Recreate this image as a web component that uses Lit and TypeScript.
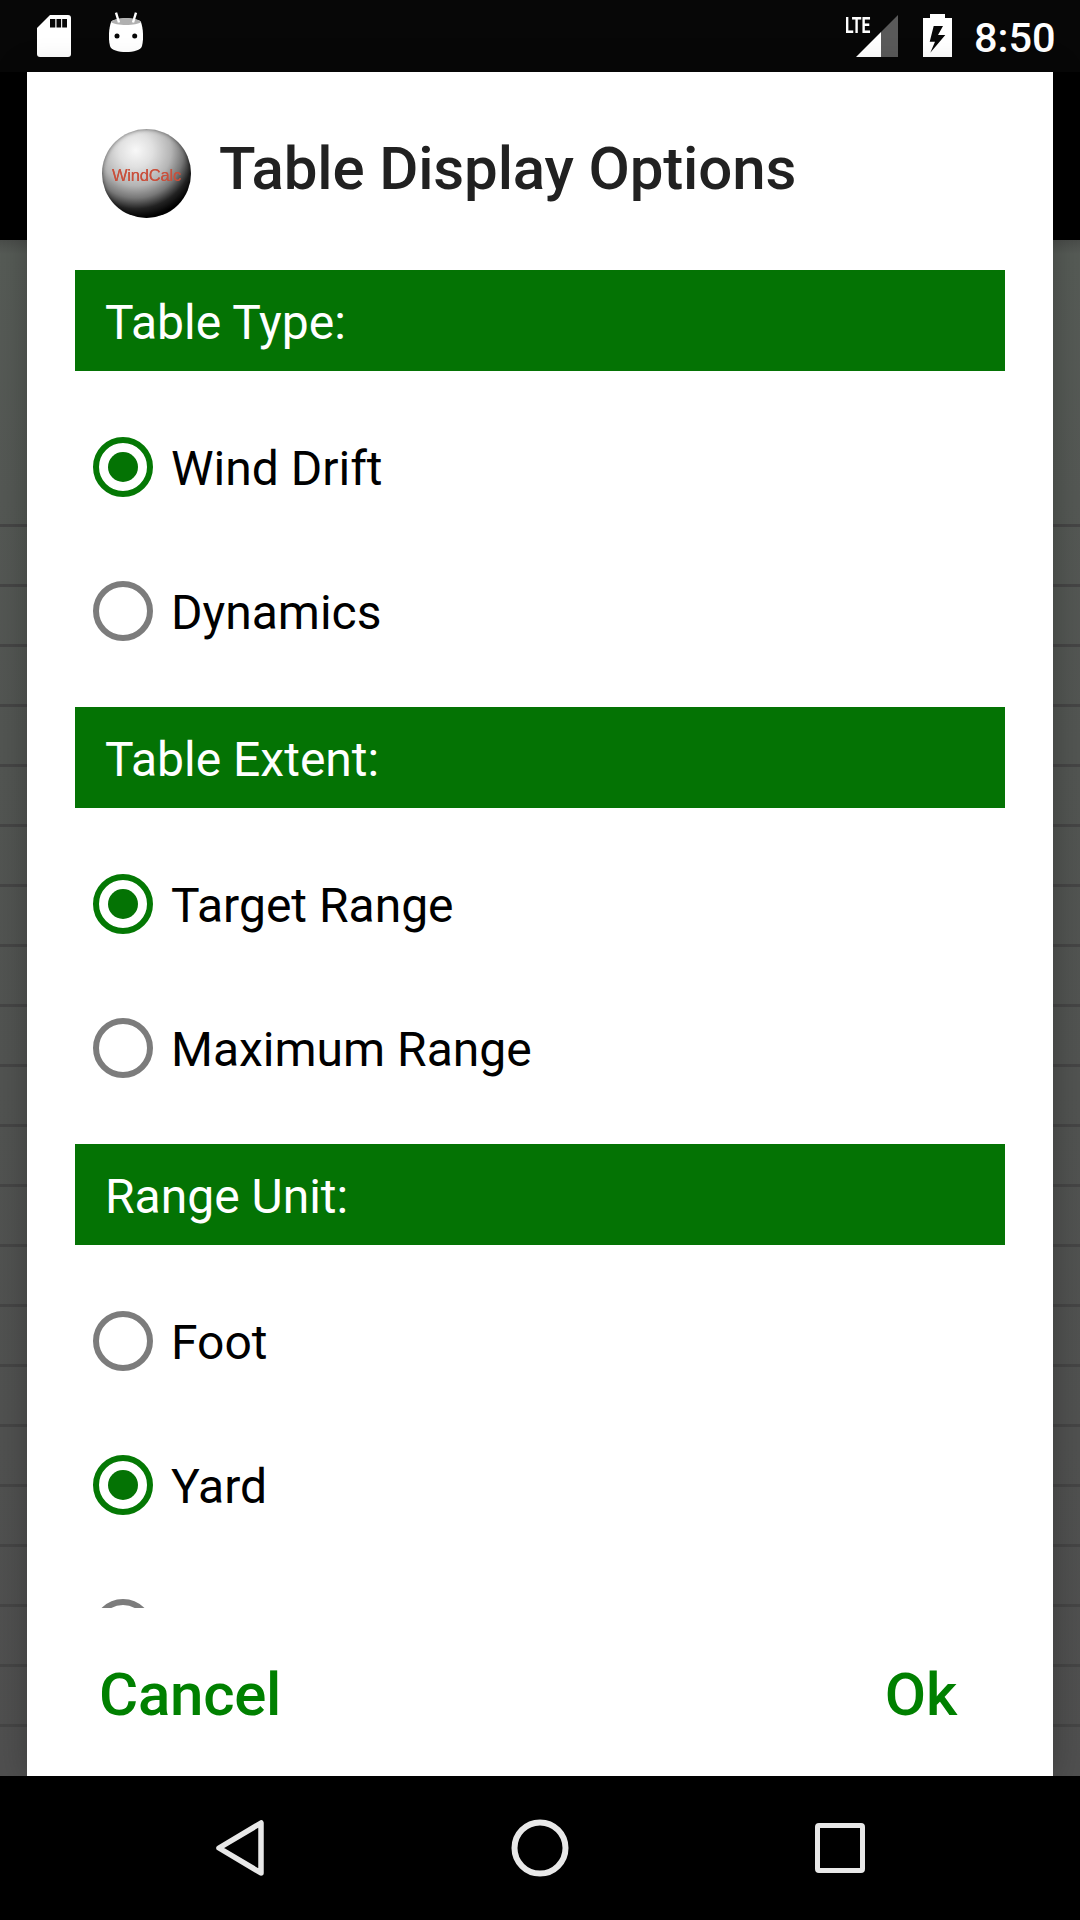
import { LitElement, html, css } from "lit";
import { customElement } from "lit/decorators.js";

const sections: { title: string; options: [string, boolean][] }[] = [
  { title: "Table Type:", options: [["Wind Drift", true], ["Dynamics", false]] },
  { title: "Table Extent:", options: [["Target Range", true], ["Maximum Range", false]] },
  { title: "Range Unit:", options: [["Foot", false], ["Yard", true], ["", false]] },
];

@customElement("app-root")
export class AppRoot extends LitElement {
  static styles = css`
    :host { display: block; width: 1080px; height: 1920px; position: relative; overflow: hidden; font-family: Roboto, sans-serif; background: #000; }
    .page { display: flex; flex-direction: column; height: 1920px; }
    .status { height: 72px; background: #070707; display: flex; align-items: center; flex: none; }
    .sd { width: 34px; height: 42px; margin-left: 37px; display: block; }
    .droid { width: 34px; height: 42px; margin-left: 38px; margin-bottom: 6px; display: block; }
    .spacer { flex: 1; }
    .net { position: relative; width: 53px; height: 42px; margin-right: 25px; }
    .net svg { position: absolute; left: 11px; top: 0; width: 42px; height: 42px; }
    .lte { position: absolute; left: 0; top: -2px; font: 700 22.5px/24px Roboto, sans-serif; color: #fff; transform: scaleX(.7); transform-origin: left top; }
    .batt { width: 29px; height: 43px; margin-right: 22px; margin-bottom: 1px; display: block; }
    .clock { color: #fff; font: 500 41.5px/48px Roboto, sans-serif; margin-top: 4px; margin-right: 25px; width: 81px; white-space: nowrap; }
    .head { height: 168px; background: #000; flex: none; }
    .back { flex: 1; background: linear-gradient(180deg, #4a4d4a 0, #565b56 14px, #525552 500px, #4f4f4f 1536px); display: flex; flex-direction: column; padding-top: 284px; gap: 57px; overflow: hidden; }
    .back i { display: block; height: 3px; background: #454545; flex: none; }
    .nav { height: 144px; background: #000; flex: none; display: flex; align-items: center; }
    .nav svg { display: block; }
    .nb { width: 60px; height: 64px; margin-left: 210px; }
    .nh { width: 60px; height: 60px; margin-left: 240px; }
    .nr { width: 58px; height: 58px; margin-left: 241px; }
    .dialog { position: absolute; left: 27px; top: 72px; width: 1026px; height: 1704px; background: #fff; display: flex; flex-direction: column; box-shadow: 0 0 30px rgba(0,0,0,.25); }
    .title { height: 198px; flex: none; display: flex; align-items: flex-start; }
    .logo { width: 89px; height: 89px; margin: 57px 0 0 75px; border-radius: 50%; flex: none; display: flex; align-items: center; justify-content: center;
      background: radial-gradient(circle 68px at 38% 24%, #f8f8f8 0, #e0e0e0 25%, #b4b4b4 52%, #777 70%, #222 86%, #000 100%);
      box-shadow: inset 0 0 4px rgba(0,0,0,.55); filter: blur(.7px); }
    .logo span { font: 400 16.5px/20px "Liberation Sans", sans-serif; color: #c9503c; letter-spacing: -.2px; margin-top: 2px; text-shadow: 0 0 .6px #c9503c; }
    h1 { margin: 0 0 0 28px; padding-top: 62px; font: 500 60px/70px Roboto, sans-serif; letter-spacing: -.15px; color: #212121; white-space: nowrap; }
    .scroll { flex: 1; overflow: hidden; padding: 0 48px; min-height: 0; }
    .bar { height: 101px; background: #047304; color: #fff; font: 400 48px/105px Roboto, sans-serif; padding-left: 30px; margin-bottom: 24px; }
    .group { margin-bottom: 24px; }
    .row { height: 144px; display: flex; align-items: center; padding-left: 18px; font: 400 48px/60px Roboto, sans-serif; color: #000; }
    .label { margin-top: 3px; }
    .radio { width: 60px; height: 60px; border: 6px solid #7c7c7c; box-sizing: border-box; border-radius: 50%; margin-right: 18px; flex: none; display: flex; align-items: center; justify-content: center; }
    .radio.on { border-color: #047804; }
    .radio.on::after { content: ""; width: 30px; height: 30px; background: #047304; border-radius: 50%; }
    .foot { height: 168px; flex: none; display: flex; justify-content: space-between; padding: 0 96px 0 72px; align-items: flex-start; }
    .foot span { font: 500 60px/70px Roboto, sans-serif; letter-spacing: -.25px; color: #008000; padding-top: 52px; }
  `;

  render() {
    return html`
      <div class="page">
        <div class="status">
          <svg class="sd" viewBox="0 0 34 42"><path fill="#fff" d="M13 0H31a3 3 0 0 1 3 3V39a3 3 0 0 1-3 3H3a3 3 0 0 1-3-3V13Z"/><path fill="#070707" d="M13 4h5.300v8.500H13zM19.500 4h4.600v8.500h-4.600zM25.200 4H30v8.500h-4.800z"/></svg>
          <svg class="droid" viewBox="0 0 34 42"><path fill="#fff" d="M2 10C6 5 28 5 32 10 34 16 35 26 33 34 31 42 3 42 1 34-1 26 0 16 2 10Z"/><path fill="#b0b0b0" d="M2 10C6 5 28 5 32 10 28 14 6 14 2 10Z"/><path stroke="#fff" stroke-width="2.400" fill="none" d="M7 .7l3 9.800M27 .7l-3 9.800"/><circle cx="8" cy="24" r="2.500" fill="#070707"/><circle cx="25.700" cy="24" r="2.500" fill="#070707"/></svg>
          <div class="spacer"></div>
          <div class="net">
            <span class="lte">LTE</span>
            <svg viewBox="0 0 42 42"><path fill="#5a5a5a" d="M25 17 42 0v42H25z"/><path fill="#fff" d="M0 42 25 17v25z"/></svg>
          </div>
          <svg class="batt" viewBox="0 0 29 43"><path fill="#fff" d="M7 0h15v4h7v39H0V4h7z"/><path fill="#070707" d="M10.700 12H20L15 21H22.300L7.300 38.700 12 27.700H6.700z"/></svg>
          <div class="clock">8:50</div>
        </div>
        <div class="head"></div>
        <div class="back">${Array.from({ length: 21 }, () => html`<i></i>`)}</div>
        <div class="nav">
          <svg class="nb" viewBox="0 0 60 64"><path d="M51 7V57L9 32Z" fill="none" stroke="#e8e8e8" stroke-width="5.500" stroke-linejoin="round"/></svg>
          <svg class="nh" viewBox="0 0 60 60"><circle cx="30" cy="30" r="25.500" fill="none" stroke="#e8e8e8" stroke-width="6"/></svg>
          <svg class="nr" viewBox="0 0 58 58"><rect x="6.500" y="6.500" width="45" height="45" rx="1.500" fill="none" stroke="#e8e8e8" stroke-width="5"/></svg>
        </div>
      </div>
      <div class="dialog">
        <div class="title">
          <div class="logo"><span>WindCalc</span></div>
          <h1>Table Display Options</h1>
        </div>
        <div class="scroll">
          ${sections.map(s => html`
            <div class="bar">${s.title}</div>
            <div class="group">
              ${s.options.map(([label, on]) => html`
                <div class="row"><div class="radio ${on ? "on" : ""}"></div><span class="label">${label}</span></div>
              `)}
            </div>
          `)}
        </div>
        <div class="foot"><span>Cancel</span><span>Ok</span></div>
      </div>
    `;
  }
}
